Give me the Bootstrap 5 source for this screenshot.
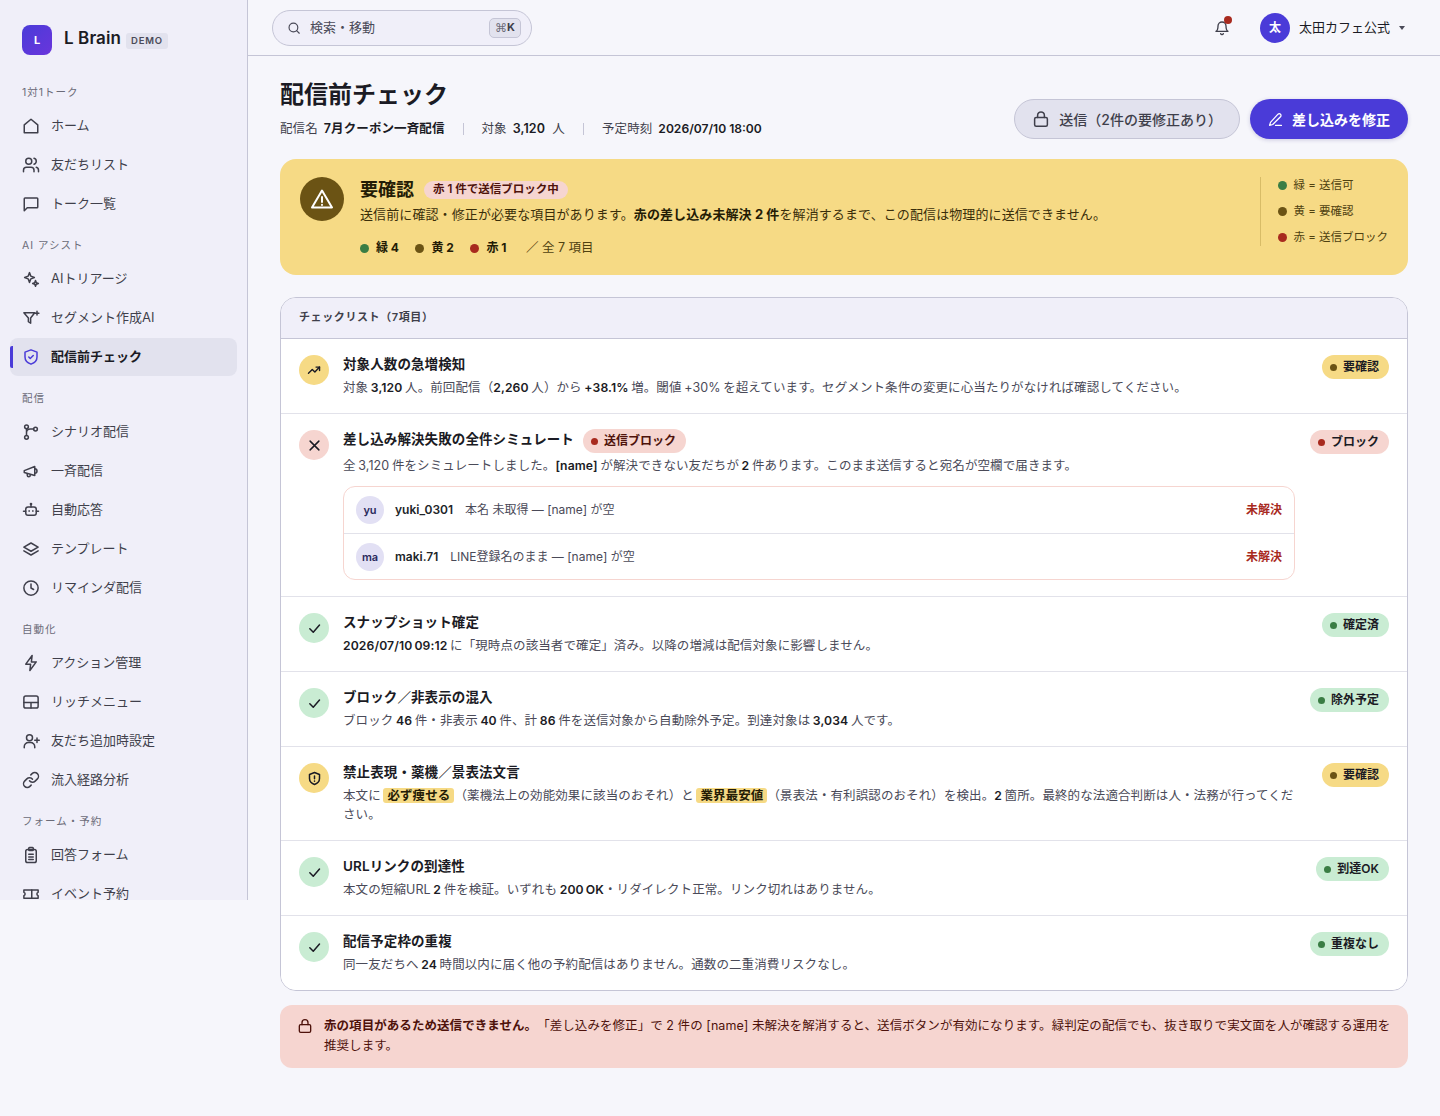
<!DOCTYPE html>
<html lang="ja">

<head>
    <meta charset="UTF-8">
    <meta name="viewport" content="width=device-width, initial-scale=1.0">
    <title>配信前チェック - L Brain</title>
    <link href="https://cdn.jsdelivr.net/npm/bootstrap@5.3.3/dist/css/bootstrap.min.css" rel="stylesheet">
    <style>
        body {
            background-color: #f6f6fb;
            color: #1b1b24;
            font-family: Inter, "Noto Sans CJK JP", sans-serif;
            font-size: 12px;
            text-spacing-trim: space-all;
        }

        svg.ic {
            fill: none;
            stroke: currentColor;
            stroke-width: 2;
            stroke-linecap: round;
            stroke-linejoin: round;
            flex-shrink: 0;
        }

        /* sidebar */
        .side-bar {
            width: 248px;
            height: 900px;
            flex-shrink: 0;
            overflow: hidden;
            background-color: #f0eff9;
            border-right: 1px solid #c5c5d6;
        }

        .brand-row {
            height: 86px;
            padding: 25px 0 0 22px;
        }

        .brand-logo {
            width: 30px;
            height: 30px;
            border-radius: 8px;
            background: linear-gradient(135deg, #4a3bd8, #6a35dc);
            color: #fff;
            font-size: 11px;
            font-weight: 700;
        }

        .brand-name {
            font-size: 17px;
            font-weight: 600;
            line-height: 26px;
            margin-left: 12px;
            letter-spacing: .1px;
        }

        .brand-tag {
            font-size: 9.5px;
            font-weight: 600;
            letter-spacing: .8px;
            background-color: #e2e2ee;
            color: #4a4a58;
            border-radius: 3px;
            padding: 1px 5px;
            margin-left: 5px;
            margin-top: 8px;
        }

        .side-label {
            font-size: 10.5px;
            letter-spacing: 1px;
            color: #6b6b78;
            padding-left: 22px;
            height: 14px;
            line-height: 14px;
            margin-bottom: 7px;
        }

        .side-group {
            margin-bottom: 15px;
        }

        .side-bar .nav-link {
            position: relative;
            height: 38px;
            margin: 0 10px 1px;
            padding: 0 0 0 12px;
            gap: 11px;
            color: #3f3f4b;
            font-size: 13px;
            border-radius: 8px;
        }

        .side-bar .nav-link.active {
            background-color: #e2e2ee;
            color: #1b1b24;
            font-weight: 600;
        }

        .side-bar .nav-link.active svg {
            color: #4a3bd8;
        }

        .side-bar .nav-link.active::before {
            content: "";
            position: absolute;
            left: 0;
            top: 8px;
            bottom: 8px;
            width: 3px;
            background-color: #4a3bd8;
            border-radius: 2px 0 0 2px;
        }

        /* top bar */
        .top-bar {
            height: 56px;
            padding: 0 35px 0 24px;
            border-bottom: 1px solid #c5c5d6;
        }

        .search-box {
            width: 260px;
            height: 36px;
            padding: 0 10px 0 14px;
            gap: 9px;
            background-color: #f0eff9;
            border: 1px solid #c5c5d6;
            border-radius: 18px;
            color: #4a4a58;
            font-size: 13px;
        }

        .search-text {
            padding-top: 1px;
        }

        .kbd-hint {
            font-size: 11px;
            font-weight: 700;
            background-color: #e2e2ee;
            border: 1px solid #c5c5d6;
            border-radius: 5px;
            width: 32px;
            height: 20px;
            color: #3f3f4b;
        }

        .kbd-hint span {
            font-family: "DejaVu Sans", sans-serif;
            font-weight: 400;
            font-size: 12px;
            color: #6b6b78;
        }

        .bell-wrap {
            color: #3f3f4b;
            margin-right: 30px;
        }

        .bell-dot {
            position: absolute;
            top: -3px;
            right: -2px;
            width: 8px;
            height: 8px;
            background-color: #a82a1e;
            border-radius: 50%;
        }

        .acct-avatar {
            width: 30px;
            height: 30px;
            border-radius: 50%;
            background-color: #4a3bd8;
            color: #fff;
            font-weight: 700;
            font-size: 12px;
        }

        .acct-name {
            font-size: 13px;
            margin-left: 9px;
            margin-right: 9px;
        }

        .acct-caret {
            width: 0;
            height: 0;
            border: 3.5px solid transparent;
            border-top: 4px solid #4a4a58;
            margin-top: 4px;
        }

        /* page head */
        .page-area {
            padding: 23px 32px 48px;
        }

        .page-title {
            font-size: 24px;
            font-weight: 700;
            line-height: 32px;
            margin: 0 0 9px;
        }

        .meta-row {
            color: #3f3f4b;
            font-size: 12.5px;
            letter-spacing: .1px;
            line-height: 18px;
            margin-bottom: 1px;
        }

        .meta-row b {
            color: #1b1b24;
            font-weight: 600;
            margin-left: 6px;
        }

        .meta-row b.meta-date {
            font-size: 12.1px;
            letter-spacing: 0;
        }

        .meta-sep {
            width: 1px;
            height: 12px;
            background-color: #c5c5d6;
            margin: 0 18px;
        }

        .head-actions {
            gap: 10px;
        }

        .btn-locked,
        .btn-fix {
            height: 40px;
            border-radius: 20px;
            font-size: 14px;
            gap: 9px;
            padding: 0 18px;
        }

        .btn-locked,
        .btn-locked:disabled {
            background-color: #e2e2ee;
            border: 1px solid #c5c5d6;
            color: #3f3f4b;
            font-weight: 500;
            opacity: 1;
            padding: 0 17px;
        }

        .btn-fix,
        .btn-fix:hover {
            background-color: #4a3bd8;
            border: 0;
            color: #fff;
            font-weight: 600;
            box-shadow: 0 1px 4px rgba(40, 30, 120, .2);
        }

        /* verdict banner */
        .verdict {
            height: 116px;
            margin: 20px 0 22px;
            padding: 18px 20px;
            background-color: #f6da85;
            color: #3a2e0a;
            border: 0;
            border-radius: 16px;
        }

        .verdict-icon {
            width: 44px;
            height: 44px;
            border-radius: 50%;
            background-color: #6b5314;
            color: #fff;
            margin-right: 16px;
        }

        .verdict-head {
            margin-top: 1px;
        }

        .verdict-title {
            font-size: 18px;
            font-weight: 700;
            color: #241c05;
            line-height: 24px;
        }

        .verdict-pill {
            font-size: 11.5px;
            font-weight: 600;
            background-color: #f6d5d0;
            color: #4e120b;
            border-radius: 9px;
            height: 18px;
            padding: 0 9px;
            margin-left: 10px;
        }

        .verdict-text {
            font-size: 13px;
            letter-spacing: .1px;
            line-height: 20px;
            margin: 2px 0 15px;
        }

        .verdict-text b,
        .verdict-stats b {
            color: #241c05;
            font-weight: 700;
        }

        .verdict-stats {
            line-height: 18px;
        }

        .verdict-stats .s-dot {
            margin-right: 7px;
        }

        .verdict-stats b {
            margin-right: 16.5px;
        }

        .verdict-total {
            font-size: 12.5px;
            margin-left: 3px;
            color: #4f4110;
        }

        .s-dot {
            width: 9px;
            height: 9px;
            border-radius: 50%;
            flex-shrink: 0;
        }

        .dot-green {
            background-color: #3a7d44;
        }

        .dot-yellow {
            background-color: #6b5314;
        }

        .dot-red {
            background-color: #a82a1e;
        }

        .verdict-legend {
            height: 69px;
            border-left: 1px solid #d8bc67;
            padding-left: 17px;
            font-size: 11.5px;
            color: #4f4110;
            flex-shrink: 0;
        }

        .legend-line {
            gap: 6px;
        }

        /* checklist */
        .check-card {
            border: 1px solid #c5c5d6;
            border-radius: 16px;
            overflow: hidden;
            margin-bottom: 14px;
        }

        .check-card>.list-group {
            border-top: 0;
            border-bottom: 0;
        }

        .check-head {
            height: 41px;
            padding: 0 18px;
            background-color: #f0eff9;
            border-bottom: 1px solid #c5c5d6;
            font-size: 11px;
            font-weight: 600;
            letter-spacing: .6px;
            color: #3f3f4b;
            line-height: 38px;
        }

        .check-row {
            padding: 16px 18px;
            gap: 14px;
            border-color: #e2e2ea;
        }

        .state-icon {
            width: 30px;
            height: 30px;
            border-radius: 50%;
            color: #1b1b24;
            flex-shrink: 0;
        }

        .state-icon svg.ic {
            stroke-width: 2.4;
        }

        .tone-yellow {
            background-color: #f6da85;
        }

        .tone-red {
            background-color: #f6d5d0;
        }

        .tone-green {
            background-color: #c9ecd3;
        }

        .check-title {
            font-size: 13.5px;
            font-weight: 600;
            letter-spacing: .1px;
            line-height: 18.6px;
            color: #1b1b24;
        }

        .title-with-pill {
            height: 24px;
            margin-bottom: -2px;
        }

        .check-desc {
            font-size: 12.5px;
            letter-spacing: .1px;
            word-spacing: -1px;
            line-height: 19.4px;
            color: #4a4a58;
            margin: 4px 0 0;
        }

        .check-desc b {
            color: #1b1b24;
            font-size: 12.2px;
            font-weight: 600;
        }

        .hl-word {
            display: inline-block;
            line-height: 15px;
            background-color: #f6da85;
            color: #241c05;
            font-weight: 600;
            border-radius: 3px;
            padding: 0 4px;
        }

        .state-pill {
            height: 24px;
            border-radius: 12px;
            padding: 0 10px 0 8px;
            gap: 6px;
            font-size: 12px;
            font-weight: 600;
            letter-spacing: 0;
            line-height: 18px;
            color: #1b1b24;
            flex-shrink: 0;
        }

        .state-pill .s-dot {
            width: 7px;
            height: 7px;
        }

        .inline-pill {
            margin-left: 9px;
            margin-top: -1px;
            color: #4e120b;
        }

        .miss-box {
            border: 1px solid #f6d5d0;
            border-radius: 12px;
            height: 94px;
            margin-top: 10.6px;
            margin-right: 1px;
        }

        .miss-row {
            height: 46px;
            padding: 0 12px;
        }

        .miss-row+.miss-row {
            height: 47px;
            border-top: 1px solid #e2e2ea;
        }

        .miss-avatar {
            width: 28px;
            height: 28px;
            border-radius: 50%;
            background-color: #e2e0f4;
            color: #2b2a5c;
            font-size: 11px;
            font-weight: 600;
            margin-right: 11px;
        }

        .miss-name {
            font-weight: 600;
            margin-right: 12px;
        }

        .miss-why {
            color: #4a4a58;
        }

        .miss-state {
            color: #a82a1e;
            font-size: 12px;
            font-weight: 600;
        }

        .block-note {
            padding: 11px 16px 12px 17px;
            gap: 11px;
            margin: 0;
            background-color: #f6d5d0;
            color: #4e120b;
            border: 0;
            border-radius: 12px;
            font-size: 12.5px;
            letter-spacing: .06px;
            line-height: 20px;
        }

        .block-note b {
            font-weight: 700;
        }

        .block-note svg {
            margin-top: 2px;
        }
    </style>
</head>

<body>
    <svg width="0" height="0" class="position-absolute">
        <symbol id="i-home" viewBox="0 0 24 24"><path d="M3 10.5 12 3l9 7.5V21H3z"/></symbol>
        <symbol id="i-users" viewBox="0 0 24 24"><path d="M16 21v-2a4 4 0 0 0-4-4H6a4 4 0 0 0-4 4v2"/><circle cx="9" cy="7" r="4"/><path d="M22 21v-2a4 4 0 0 0-3-3.87"/><path d="M16 3.13a4 4 0 0 1 0 7.75"/></symbol>
        <symbol id="i-chat" viewBox="0 0 24 24"><path d="M21 16a1 1 0 0 1-1 1H7l-4 4V5a1 1 0 0 1 1-1h16a1 1 0 0 1 1 1z"/></symbol>
        <symbol id="i-spark" viewBox="0 0 24 24"><path d="M10 3.5 11.8 8.2 16.5 10l-4.7 1.800L10 16.500 8.200 11.800 3.500 10l4.700-1.800z"/><path d="M18 14l1 2.800 2.800 1.200-2.800 1-1 2.800-1-2.800-2.800-1 2.800-1.200z"/></symbol>
        <symbol id="i-funnel" viewBox="0 0 24 24"><path d="M2.500 5H17l-5.500 7v7l-3-2v-5z"/><path d="M20 3v5M17.500 5.500h5"/></symbol>
        <symbol id="i-shield" viewBox="0 0 24 24"><path d="M12 2.500 20 5.500V12c0 5-3.500 8-8 9.500C7.500 20 4 17 4 12V5.500z"/><path d="m9 12 2 2 4-4"/></symbol>
        <symbol id="i-branch" viewBox="0 0 24 24"><circle cx="6" cy="5" r="2.500"/><circle cx="6" cy="19" r="2.500"/><circle cx="18" cy="8" r="2.500"/><path d="M6 7.500v9M15.500 8H11a5 5 0 0 0-5 5"/></symbol>
        <symbol id="i-horn" viewBox="0 0 24 24"><path d="M3 11.500 17 6v12L3 14z"/><path d="M17 9a3 3 0 0 1 0 6"/><path d="M7 15.500v2a2 2 0 0 0 4 0v-.5"/></symbol>
        <symbol id="i-bot" viewBox="0 0 24 24"><rect x="5" y="8" width="14" height="11" rx="3"/><path d="M12 8V4.500M2 13.500h3M19 13.500h3M9.500 13v.5M14.500 13v.5"/><circle cx="12" cy="4" r=".8"/></symbol>
        <symbol id="i-layers" viewBox="0 0 24 24"><path d="M12 4 2.500 9.500 12 15l9.500-5.500z"/><path d="m2.500 14.500 9.500 5.500 9.500-5.500"/></symbol>
        <symbol id="i-clock" viewBox="0 0 24 24"><circle cx="12" cy="12" r="9.500"/><path d="M12 6.500V12l3.500 2"/></symbol>
        <symbol id="i-zap" viewBox="0 0 24 24"><path d="M13.500 2 5 13.500h6.500L10.500 22 19 10.500h-6.500z"/></symbol>
        <symbol id="i-menu" viewBox="0 0 24 24"><rect x="2.500" y="4" width="19" height="16" rx="2.500"/><path d="M2.500 12.500h19M12 12.500V20"/></symbol>
        <symbol id="i-adduser" viewBox="0 0 24 24"><circle cx="10" cy="7.500" r="4"/><path d="M3 21v-1.500a5.500 5.500 0 0 1 5.500-5.500h3a5.500 5.500 0 0 1 5.500 5.500V21"/><path d="M20 8v6M17 11h6"/></symbol>
        <symbol id="i-link" viewBox="0 0 24 24"><path d="M10 13a5 5 0 0 0 7.540.54l3-3a5 5 0 0 0-7.070-7.070l-1.720 1.710"/><path d="M14 11a5 5 0 0 0-7.540-.54l-3 3a5 5 0 0 0 7.070 7.070l1.710-1.710"/></symbol>
        <symbol id="i-clip" viewBox="0 0 24 24"><rect x="5" y="4.500" width="14" height="17.500" rx="2.500"/><rect x="9" y="2" width="6" height="4" rx="1"/><path d="M9 11h6M9 14.500h6M9 18h6"/></symbol>
        <symbol id="i-ticket" viewBox="0 0 24 24"><path d="M2.500 6.500h19v3.300a2.300 2.300 0 0 0 0 4.400v3.300h-19v-3.300a2.300 2.300 0 0 0 0-4.400z"/><path d="M13 6.500v11"/></symbol>
        <symbol id="i-search" viewBox="0 0 24 24"><circle cx="11" cy="11" r="7.500"/><path d="m21 21-4.500-4.500"/></symbol>
        <symbol id="i-bell" viewBox="0 0 24 24"><path d="M18 9a6 6 0 0 0-12 0c0 6.500-3 8-3 8h18s-3-1.500-3-8"/><path d="M10 20.500a2.200 2.200 0 0 0 4 0"/></symbol>
        <symbol id="i-lock" viewBox="0 0 24 24"><rect x="3.500" y="10" width="17" height="11.500" rx="2"/><path d="M7.500 10V7a4.500 4.500 0 0 1 9 0v3"/></symbol>
        <symbol id="i-pen" viewBox="0 0 24 24"><path d="M16 3.500a2.800 2.800 0 0 1 4 4L7.500 20 2.500 21.500 4 16.500z"/><path d="M12 21.500h9.500"/></symbol>
        <symbol id="i-trend" viewBox="0 0 24 24"><path d="m2.500 17.500 6.500-6.500 4.500 4.500L21.500 7"/><path d="M15.500 7h6v6"/></symbol>
        <symbol id="i-x" viewBox="0 0 24 24"><path d="M5 5l14 14M19 5 5 19"/></symbol>
        <symbol id="i-check" viewBox="0 0 24 24"><path d="M4.500 12.500 10 18 20 6.500"/></symbol>
        <symbol id="i-shieldwarn" viewBox="0 0 24 24"><path d="M12 2.500 20 5.500V12c0 5-3.500 8-8 9.500C7.500 20 4 17 4 12V5.500z"/><path d="M12 8v4.500M12 16v.2"/></symbol>
        <symbol id="i-warn" viewBox="0 0 24 24"><path d="M12 3.500 22 20.500H2z"/><path d="M12 10v5M12 17.800v.2"/></symbol>
    </svg>

    <div class="d-flex align-items-start">
        <aside class="side-bar">
            <div class="brand-row d-flex align-items-start">
                <span class="brand-logo d-flex align-items-center justify-content-center">L</span>
                <span class="brand-name">L Brain</span>
                <span class="brand-tag">DEMO</span>
            </div>

            <div class="side-group">
                <div class="side-label">1対1トーク</div>
                <nav class="nav flex-column">
                    <a class="nav-link d-flex align-items-center" href="#"><svg class="ic" width="18" height="18"><use href="#i-home"/></svg>ホーム</a>
                    <a class="nav-link d-flex align-items-center" href="#"><svg class="ic" width="18" height="18"><use href="#i-users"/></svg>友だちリスト</a>
                    <a class="nav-link d-flex align-items-center" href="#"><svg class="ic" width="18" height="18"><use href="#i-chat"/></svg>トーク一覧</a>
                </nav>
            </div>
            <div class="side-group">
                <div class="side-label">AI アシスト</div>
                <nav class="nav flex-column">
                    <a class="nav-link d-flex align-items-center" href="#"><svg class="ic" width="18" height="18"><use href="#i-spark"/></svg>AIトリアージ</a>
                    <a class="nav-link d-flex align-items-center" href="#"><svg class="ic" width="18" height="18"><use href="#i-funnel"/></svg>セグメント作成AI</a>
                    <a class="nav-link active d-flex align-items-center" href="#"><svg class="ic" width="18" height="18"><use href="#i-shield"/></svg>配信前チェック</a>
                </nav>
            </div>
            <div class="side-group">
                <div class="side-label">配信</div>
                <nav class="nav flex-column">
                    <a class="nav-link d-flex align-items-center" href="#"><svg class="ic" width="18" height="18"><use href="#i-branch"/></svg>シナリオ配信</a>
                    <a class="nav-link d-flex align-items-center" href="#"><svg class="ic" width="18" height="18"><use href="#i-horn"/></svg>一斉配信</a>
                    <a class="nav-link d-flex align-items-center" href="#"><svg class="ic" width="18" height="18"><use href="#i-bot"/></svg>自動応答</a>
                    <a class="nav-link d-flex align-items-center" href="#"><svg class="ic" width="18" height="18"><use href="#i-layers"/></svg>テンプレート</a>
                    <a class="nav-link d-flex align-items-center" href="#"><svg class="ic" width="18" height="18"><use href="#i-clock"/></svg>リマインダ配信</a>
                </nav>
            </div>
            <div class="side-group">
                <div class="side-label">自動化</div>
                <nav class="nav flex-column">
                    <a class="nav-link d-flex align-items-center" href="#"><svg class="ic" width="18" height="18"><use href="#i-zap"/></svg>アクション管理</a>
                    <a class="nav-link d-flex align-items-center" href="#"><svg class="ic" width="18" height="18"><use href="#i-menu"/></svg>リッチメニュー</a>
                    <a class="nav-link d-flex align-items-center" href="#"><svg class="ic" width="18" height="18"><use href="#i-adduser"/></svg>友だち追加時設定</a>
                    <a class="nav-link d-flex align-items-center" href="#"><svg class="ic" width="18" height="18"><use href="#i-link"/></svg>流入経路分析</a>
                </nav>
            </div>
            <div class="side-group">
                <div class="side-label">フォーム・予約</div>
                <nav class="nav flex-column">
                    <a class="nav-link d-flex align-items-center" href="#"><svg class="ic" width="18" height="18"><use href="#i-clip"/></svg>回答フォーム</a>
                    <a class="nav-link d-flex align-items-center" href="#"><svg class="ic" width="18" height="18"><use href="#i-ticket"/></svg>イベント予約</a>
                </nav>
            </div>
        </aside>

        <div class="flex-grow-1 min-w-0">
            <header class="top-bar d-flex align-items-center justify-content-between">
                <div class="search-box d-flex align-items-center">
                    <svg class="ic" width="14" height="14"><use href="#i-search"/></svg>
                    <span class="search-text flex-grow-1">検索・移動</span>
                    <span class="kbd-hint d-flex align-items-center justify-content-center"><span>⌘</span>K</span>
                </div>
                <div class="d-flex align-items-center">
                    <span class="bell-wrap position-relative d-flex">
                        <svg class="ic" width="16" height="18" viewBox="0 0 24 24"><use href="#i-bell"/></svg>
                        <span class="bell-dot"></span>
                    </span>
                    <span class="acct-avatar d-flex align-items-center justify-content-center">太</span>
                    <span class="acct-name">太田カフェ公式</span>
                    <span class="acct-caret"></span>
                </div>
            </header>

            <main class="page-area">
                <div class="d-flex justify-content-between align-items-end">
                    <div>
                        <h1 class="page-title">配信前チェック</h1>
                        <div class="meta-row d-flex align-items-center">
                            <span>配信名<b>7月クーポン一斉配信</b></span>
                            <span class="meta-sep"></span>
                            <span>対象<b>3,120</b>&nbsp; 人</span>
                            <span class="meta-sep"></span>
                            <span>予定時刻<b class="meta-date">2026/07/10 18:00</b></span>
                        </div>
                    </div>
                    <div class="head-actions d-flex">
                        <button class="btn btn-locked d-flex align-items-center" disabled><svg class="ic" width="18" height="18"><use href="#i-lock"/></svg>送信（2件の要修正あり）</button>
                        <button class="btn btn-fix d-flex align-items-center"><svg class="ic" width="15" height="15"><use href="#i-pen"/></svg>差し込みを修正</button>
                    </div>
                </div>

                <section class="verdict alert d-flex align-items-start" role="alert">
                    <span class="verdict-icon d-flex align-items-center justify-content-center"><svg class="ic" width="24" height="24"><use href="#i-warn"/></svg></span>
                    <div class="flex-grow-1">
                        <div class="verdict-head d-flex align-items-center">
                            <span class="verdict-title">要確認</span>
                            <span class="verdict-pill d-flex align-items-center">赤 1 件で送信ブロック中</span>
                        </div>
                        <p class="verdict-text">送信前に確認・修正が必要な項目があります。<b>赤の差し込み未解決 2 件</b>を解消するまで、この配信は物理的に送信できません。</p>
                        <div class="verdict-stats d-flex align-items-center">
                            <span class="s-dot dot-green"></span><b>緑 4</b>
                            <span class="s-dot dot-yellow"></span><b>黄 2</b>
                            <span class="s-dot dot-red"></span><b>赤 1</b>
                            <span class="verdict-total">／ 全 7 項目</span>
                        </div>
                    </div>
                    <div class="verdict-legend d-flex flex-column justify-content-between">
                        <div class="legend-line d-flex align-items-center"><span class="s-dot dot-green"></span>緑 = 送信可</div>
                        <div class="legend-line d-flex align-items-center"><span class="s-dot dot-yellow"></span>黄 = 要確認</div>
                        <div class="legend-line d-flex align-items-center"><span class="s-dot dot-red"></span>赤 = 送信ブロック</div>
                    </div>
                </section>

                <section class="card check-card">
                    <div class="check-head">チェックリスト（7項目）</div>
                    <div class="list-group list-group-flush">
                        <div class="list-group-item check-row d-flex align-items-start">
                            <span class="state-icon tone-yellow d-flex align-items-center justify-content-center"><svg class="ic" width="14" height="14"><use href="#i-trend"/></svg></span>
                            <div class="flex-grow-1">
                                <div class="check-title">対象人数の急増検知</div>
                                <p class="check-desc">対象 <b>3,120</b> 人。前回配信（<b>2,260</b> 人）から <b>+38.1%</b> 増。閾値 +30% を超えています。セグメント条件の変更に心当たりがなければ確認してください。</p>
                            </div>
                            <span class="state-pill tone-yellow d-flex align-items-center"><span class="s-dot dot-yellow"></span>要確認</span>
                        </div>

                        <div class="list-group-item check-row d-flex align-items-start">
                            <span class="state-icon tone-red d-flex align-items-center justify-content-center"><svg class="ic" width="15" height="15"><use href="#i-x"/></svg></span>
                            <div class="flex-grow-1">
                                <div class="check-title title-with-pill d-flex align-items-start">差し込み解決失敗の全件シミュレート<span class="state-pill inline-pill tone-red d-flex align-items-center"><span class="s-dot dot-red"></span>送信ブロック</span></div>
                                <p class="check-desc">全 3,120 件をシミュレートしました。<b>[name]</b> が解決できない友だちが <b>2</b> 件あります。このまま送信すると宛名が空欄で届きます。</p>
                                <div class="miss-box">
                                    <div class="miss-row d-flex align-items-center">
                                        <span class="miss-avatar d-flex align-items-center justify-content-center">yu</span>
                                        <span class="miss-name">yuki_0301</span>
                                        <span class="miss-why flex-grow-1">本名 未取得 — [name] が空</span>
                                        <span class="miss-state">未解決</span>
                                    </div>
                                    <div class="miss-row d-flex align-items-center">
                                        <span class="miss-avatar d-flex align-items-center justify-content-center">ma</span>
                                        <span class="miss-name">maki.71</span>
                                        <span class="miss-why flex-grow-1">LINE登録名のまま — [name] が空</span>
                                        <span class="miss-state">未解決</span>
                                    </div>
                                </div>
                            </div>
                            <span class="state-pill tone-red d-flex align-items-center"><span class="s-dot dot-red"></span>ブロック</span>
                        </div>

                        <div class="list-group-item check-row d-flex align-items-start">
                            <span class="state-icon tone-green d-flex align-items-center justify-content-center"><svg class="ic" width="15" height="15"><use href="#i-check"/></svg></span>
                            <div class="flex-grow-1">
                                <div class="check-title">スナップショット確定</div>
                                <p class="check-desc"><b>2026/07/10 09:12</b> に「現時点の該当者で確定」済み。以降の増減は配信対象に影響しません。</p>
                            </div>
                            <span class="state-pill tone-green d-flex align-items-center"><span class="s-dot dot-green"></span>確定済</span>
                        </div>

                        <div class="list-group-item check-row d-flex align-items-start">
                            <span class="state-icon tone-green d-flex align-items-center justify-content-center"><svg class="ic" width="15" height="15"><use href="#i-check"/></svg></span>
                            <div class="flex-grow-1">
                                <div class="check-title">ブロック／非表示の混入</div>
                                <p class="check-desc">ブロック <b>46</b> 件・非表示 <b>40</b> 件、計 <b>86</b> 件を送信対象から自動除外予定。到達対象は <b>3,034</b> 人です。</p>
                            </div>
                            <span class="state-pill tone-green d-flex align-items-center"><span class="s-dot dot-green"></span>除外予定</span>
                        </div>

                        <div class="list-group-item check-row d-flex align-items-start">
                            <span class="state-icon tone-yellow d-flex align-items-center justify-content-center"><svg class="ic" width="15" height="15"><use href="#i-shieldwarn"/></svg></span>
                            <div class="flex-grow-1">
                                <div class="check-title">禁止表現・薬機／景表法文言</div>
                                <p class="check-desc pe-2">本文に <span class="hl-word">必ず痩せる</span>（薬機法上の効能効果に該当のおそれ）と <span class="hl-word">業界最安値</span>（景表法・有利誤認のおそれ）を検出。<b>2</b> 箇所。最終的な法適合判断は人・法務が行ってください。</p>
                            </div>
                            <span class="state-pill tone-yellow d-flex align-items-center"><span class="s-dot dot-yellow"></span>要確認</span>
                        </div>

                        <div class="list-group-item check-row d-flex align-items-start">
                            <span class="state-icon tone-green d-flex align-items-center justify-content-center"><svg class="ic" width="15" height="15"><use href="#i-check"/></svg></span>
                            <div class="flex-grow-1">
                                <div class="check-title">URLリンクの到達性</div>
                                <p class="check-desc">本文の短縮URL <b>2</b> 件を検証。いずれも <b>200 OK</b>・リダイレクト正常。リンク切れはありません。</p>
                            </div>
                            <span class="state-pill tone-green d-flex align-items-center"><span class="s-dot dot-green"></span>到達OK</span>
                        </div>

                        <div class="list-group-item check-row d-flex align-items-start">
                            <span class="state-icon tone-green d-flex align-items-center justify-content-center"><svg class="ic" width="15" height="15"><use href="#i-check"/></svg></span>
                            <div class="flex-grow-1">
                                <div class="check-title">配信予定枠の重複</div>
                                <p class="check-desc">同一友だちへ <b>24</b> 時間以内に届く他の予約配信はありません。通数の二重消費リスクなし。</p>
                            </div>
                            <span class="state-pill tone-green d-flex align-items-center"><span class="s-dot dot-green"></span>重複なし</span>
                        </div>
                    </div>
                </section>

                <div class="block-note alert d-flex align-items-start" role="alert">
                    <svg class="ic" width="16" height="16"><use href="#i-lock"/></svg>
                    <div><b>赤の項目があるため送信できません。</b>「差し込みを修正」で 2 件の [name] 未解決を解消すると、送信ボタンが有効になります。緑判定の配信でも、抜き取りで実文面を人が確認する運用を推奨します。</div>
                </div>
            </main>
        </div>
    </div>

    <script src="https://cdn.jsdelivr.net/npm/bootstrap@5.3.3/dist/js/bootstrap.bundle.min.js"></script>
</body>

</html>
